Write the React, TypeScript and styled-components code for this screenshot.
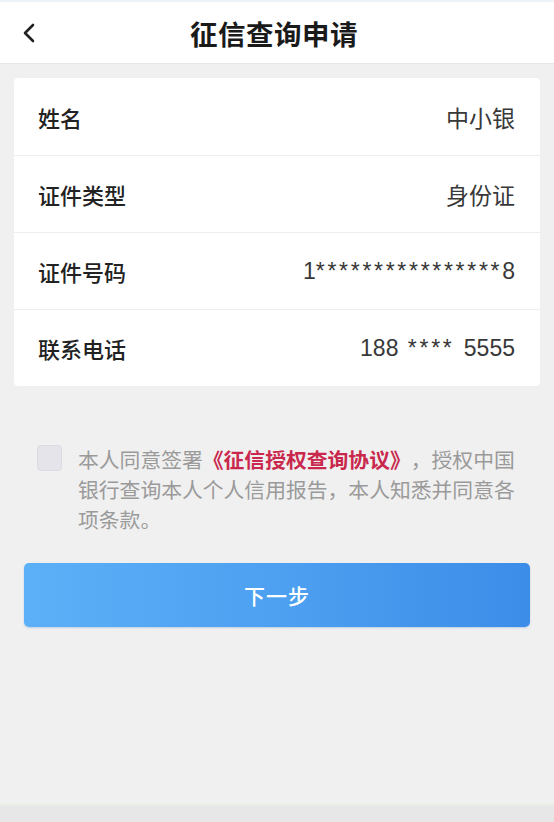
import React from "react";
import styled, { createGlobalStyle } from "styled-components";

const GlobalStyle = createGlobalStyle`
  html, body {
    margin: 0;
    padding: 0;
    background: #f0f0f0;
  }
  body {
    font-family: "Noto Sans CJK SC", "Noto Sans", sans-serif;
    -webkit-font-smoothing: antialiased;
  }
  * { box-sizing: border-box; }
`;

const Page = styled.div`
  width: 554px;
  min-height: 822px;
  display: flex;
  flex-direction: column;
  background: #f0f0f0;
`;

const Header = styled.header`
  height: 64px;
  display: flex;
  align-items: center;
  justify-content: center;
  position: relative;
  background: #fff;
  border-top: 2px solid #eef3f8;
  border-bottom: 1px solid #e6e6e6;
`;

const BackButton = styled.button`
  position: absolute;
  left: 15px;
  top: 50%;
  transform: translateY(-50%);
  width: 28px;
  height: 28px;
  padding: 0;
  border: none;
  background: none;
  display: flex;
  align-items: center;
  justify-content: center;
`;

const Title = styled.h1`
  margin: 0 6px 0 0;
  font-size: 27.5px;
  font-weight: 700;
  color: #1a1a1a;
  letter-spacing: 0.5px;
`;

const Card = styled.section`
  margin: 14px 14px 0;
  background: #fff;
  border-radius: 4px;
  overflow: hidden;
`;

const Row = styled.div`
  height: 77px;
  display: flex;
  align-items: center;
  justify-content: space-between;
  padding: 0 25px 0 24px;

  & + & {
    border-top: 1px solid #eeeeee;
  }
`;

const Label = styled.span`
  font-size: 22px;
  font-weight: 500;
  color: #222;
`;

const Value = styled.span`
  font-family: "Liberation Sans", "Noto Sans CJK SC", sans-serif;
  font-size: 23px;
  color: #383838;
  white-space: pre;
  word-spacing: 3px;
`;

const Mask = styled.span`
  letter-spacing: 2.7px;
`;

const Agreement = styled.div`
  margin: 58px 0 0 37px;
  display: flex;
  align-items: flex-start;
  gap: 16px;
`;

const Checkbox = styled.span`
  flex: none;
  width: 25px;
  height: 26px;
  margin-top: 1px;
  border-radius: 4px;
  background: #e4e4ea;
  border: 1px solid #dadae2;
`;

const AgreementText = styled.p`
  margin: 0;
  width: 440px;
  font-size: 20.8px;
  line-height: 30px;
  color: #9a9a9a;
  text-spacing-trim: space-all;
`;

const ProtocolLink = styled.a`
  color: #c9284c;
  font-weight: 700;
  text-decoration: none;
`;

const NextButton = styled.button`
  margin: 29px 24px 0;
  height: 64px;
  border: none;
  border-radius: 5px;
  background: linear-gradient(90deg, #5cb0f7 0%, #4c9ef0 55%, #3b8de8 100%);
  box-shadow: 0 1px 2px rgba(40, 110, 200, 0.25);
  color: #fff;
  font-family: inherit;
  font-size: 21px;
  font-weight: 500;
  letter-spacing: 1px;
`;

const Spacer = styled.div`
  flex: 1;
`;

const BottomBar = styled.div`
  height: 18px;
  background: #e7e7e7;
  border-top: 2px solid #e8ede6;
`;

const rows = [
  { label: "姓名", value: "中小银" },
  { label: "证件类型", value: "身份证" },
  { label: "证件号码", value: "1****************8" },
  { label: "联系电话", value: "188 **** 5555" },
];

// masked digits get a little extra room so the stars read like the app's font
function renderValue(v: string) {
  return v.split(/(\*+)/).map((part, i) =>
    part.startsWith("*") ? <Mask key={i}>{part}</Mask> : part
  );
}

export default function App() {
  return (
    <>
      <GlobalStyle />
      <Page>
        <Header>
          <BackButton aria-label="返回">
            <svg width="16" height="22" viewBox="0 0 16 22" fill="none">
              <path d="M12 3 L4 11 L12 19" stroke="#222" strokeWidth="2.6" strokeLinecap="round" strokeLinejoin="round" />
            </svg>
          </BackButton>
          <Title>征信查询申请</Title>
        </Header>

        <Card>
          {rows.map((r) => (
            <Row key={r.label}>
              <Label>{r.label}</Label>
              <Value>{renderValue(r.value)}</Value>
            </Row>
          ))}
        </Card>

        <Agreement>
          <Checkbox />
          <AgreementText>
            本人同意签署<ProtocolLink href="#">《征信授权查询协议》</ProtocolLink>，授权中国银行查询本人个人信用报告，本人知悉并同意各项条款。
          </AgreementText>
        </Agreement>

        <NextButton>下一步</NextButton>

        <Spacer />
        <BottomBar />
      </Page>
    </>
  );
}
